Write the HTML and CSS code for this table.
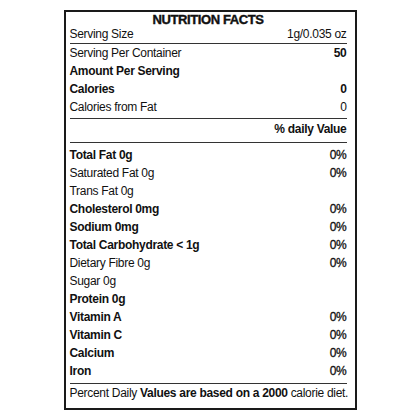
FILE: index.html
```html
<!DOCTYPE html>
<html lang="en">

<head>
    <meta charset="UTF-8">
    <meta name="viewport" content="width=device-width, initial-scale=1.0">
    <title>Nutrition Facts</title>
    <link rel="stylesheet" href="styles.css">
</head>

<body>
    <div class="label">
        <h1 class="title">NUTRITION FACTS</h1>
        <div class="row serving">
            <span>Serving Size</span>
            <span>1g/0.035 oz</span>
        </div>
        <div class="rule"></div>

        <div class="group top-group">
            <div class="row"><span>Serving Per Container</span><span class="bold">50</span></div>
            <div class="row bold"><span>Amount Per Serving</span></div>
            <div class="row bold"><span>Calories</span><span>0</span></div>
            <div class="row"><span>Calories from Fat</span><span>0</span></div>
        </div>
        <div class="rule rule-mid"></div>

        <div class="row daily">
            <span></span>
            <span class="bold">% daily Value</span>
        </div>
        <div class="rule"></div>

        <div class="group nutrients">
            <div class="row"><span class="bold">Total Fat 0g</span><span class="pct">0%</span></div>
            <div class="row"><span>Saturated Fat 0g</span><span class="pct">0%</span></div>
            <div class="row"><span>Trans Fat 0g</span></div>
            <div class="row"><span class="bold">Cholesterol 0mg</span><span class="pct">0%</span></div>
            <div class="row"><span class="bold">Sodium 0mg</span><span class="pct">0%</span></div>
            <div class="row"><span class="bold">Total Carbohydrate &lt; 1g</span><span class="pct">0%</span></div>
            <div class="row"><span>Dietary Fibre 0g</span><span class="pct">0%</span></div>
            <div class="row"><span>Sugar 0g</span></div>
            <div class="row"><span class="bold">Protein 0g</span></div>
            <div class="row"><span class="bold">Vitamin A</span><span class="pct">0%</span></div>
            <div class="row"><span class="bold">Vitamin C</span><span class="pct">0%</span></div>
            <div class="row"><span class="bold">Calcium</span><span class="pct">0%</span></div>
            <div class="row"><span class="bold">Iron</span><span class="pct">0%</span></div>
        </div>
        <div class="rule rule-foot"></div>

        <p class="note">Percent Daily <b>Values are based on a 2000</b> calorie diet.</p>
    </div>
</body>

</html>
```

FILE: styles.css
```css
body {
    font-family: "Liberation Sans", Arial, sans-serif;
    margin: 0;
    padding: 0;
    background-color: #fff;
    color: #111;
}

.label {
    width: 293px;
    margin: 10px auto 0;
    padding: 2px 8px 6px 4px;
    border: 2px solid #1a1a1a;
    box-sizing: border-box;
    font-size: 12px;
    letter-spacing: -0.3px;
}

.title {
    margin: 0;
    font-size: 13px;
    line-height: 12px;
    font-weight: 900;
    text-align: center;
    letter-spacing: -0.4px;
    -webkit-text-stroke: 0.4px #111;
}

.row {
    display: flex;
    justify-content: space-between;
    line-height: 18px;
    height: 18px;
}

.serving {
    line-height: 16px;
    height: 16px;
}

.bold {
    font-weight: bold;
}

.pct {
    -webkit-text-stroke: 0.3px #111;
}

.rule {
    height: 1px;
    margin-top: 1px;
    background-color: #333;
}

.rule-mid {
    margin-top: 2px;
}

.daily {
    height: 22px;
    padding-top: 1px;
    box-sizing: border-box;
}

.nutrients {
    margin-top: 3px;
}

.rule-foot {
    margin-top: 3px;
}

.note {
    margin: 0;
    line-height: 18px;
    white-space: nowrap;
}
```
